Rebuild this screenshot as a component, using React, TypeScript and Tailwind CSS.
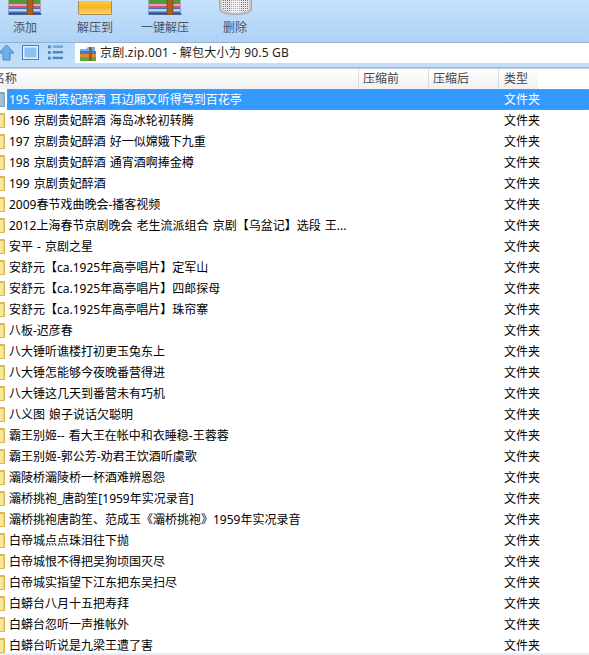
const rows = [
  "195 京剧贵妃醉酒 耳边厢又听得驾到百花亭",
  "196 京剧贵妃醉酒 海岛冰轮初转腾",
  "197 京剧贵妃醉酒 好一似嫦娥下九重",
  "198 京剧贵妃醉酒 通宵酒啊捧金樽",
  "199 京剧贵妃醉酒",
  "2009春节戏曲晚会-播客视频",
  "2012上海春节京剧晚会 老生流派组合 京剧【乌盆记】选段 王...",
  "安平 - 京剧之星",
  "安舒元【ca.1925年高亭唱片】定军山",
  "安舒元【ca.1925年高亭唱片】四郎探母",
  "安舒元【ca.1925年高亭唱片】珠帘寨",
  "八板-迟彦春",
  "八大锤听谯楼打初更玉兔东上",
  "八大锤怎能够今夜晚番营得进",
  "八大锤这几天到番营未有巧机",
  "八义图 娘子说话欠聪明",
  "霸王别姬-- 看大王在帐中和衣睡稳-王蓉蓉",
  "霸王别姬-郭公芳-劝君王饮酒听虞歌",
  "灞陵桥灞陵桥一杯酒难辨恩怨",
  "灞桥挑袍_唐韵笙[1959年实况录音]",
  "灞桥挑袍唐韵笙、范成玉《灞桥挑袍》1959年实况录音",
  "白帝城点点珠泪往下抛",
  "白帝城恨不得把吴狗顷国灭尽",
  "白帝城实指望下江东把东吴扫尽",
  "白蟒台八月十五把寿拜",
  "白蟒台忽听一声推帐外",
  "白蟒台听说是九梁王遭了害",
];

function RarIcon() {
  return (
    <svg viewBox="0 0 34 15" className="h-[15px] w-[34px]">
      <rect x="0.5" y="-4" width="32" height="7" fill="#4f9a3f" />
      <rect x="0.5" y="3" width="32" height="5" fill="#d8506f" />
      <rect x="1" y="4" width="31" height="2" fill="#eb9fb0" />
      <rect x="0.5" y="8" width="32" height="6" fill="#3f6fc0" />
      <rect x="1" y="9" width="31" height="2.5" fill="#bcd3ef" />
      <rect x="0.5" y="13.5" width="33" height="1.2" fill="#26355f" />
      <rect x="19" y="-4" width="6" height="19" fill="#a8621e" stroke="#6e3f10" strokeWidth="0.6" />
    </svg>
  );
}

function TrashIcon() {
  return (
    <svg viewBox="0 0 33 15" className="h-[15px] w-[33px]">
      <defs>
        <pattern id="dots" width="2" height="2" patternUnits="userSpaceOnUse">
          <rect width="2" height="2" fill="#e8e8e8" />
          <rect width="1" height="1" fill="#777" />
        </pattern>
      </defs>
      <path d="M0.5 -2 H32.5 V9 Q32 14.5 16.5 14.5 Q1 14.5 0.5 9 Z" fill="#c9c9c9" stroke="#8a8a8a" strokeWidth="0.6" />
      <path d="M3 -2 H30 V9 Q24 12.5 16.5 12.5 Q9 12.5 3 9 Z" fill="url(#dots)" />
      <rect x="12" y="-2" width="9" height="15" fill="#fff" opacity="0.4" />
    </svg>
  );
}

function ToolButton({ label, children }: { label: string; children: React.ReactNode }) {
  return (
    <div className="flex w-[70px] shrink-0 flex-col items-center">
      <div className="flex h-[15px] items-end">{children}</div>
      <div className="mt-[5px] h-[16px] text-[12px] leading-[16px] text-[#4d545e]">{label}</div>
    </div>
  );
}

function FolderStub({ selected }: { selected?: boolean }) {
  return (
    <svg viewBox="0 0 5 15" className="h-[15px] w-[5px] shrink-0">
      <rect x="-4" y="0" width="9" height="15" rx="1" fill={selected ? "#7fa6bd" : "#dcb64f"} />
      <rect x="0" y="2" width="3.5" height="12" fill={selected ? "#a3c2d6" : "#f9e79a"} />
    </svg>
  );
}

export default function App() {
  return (
    <div
      className="h-[655px] w-[589px] overflow-hidden bg-white text-[12px] text-black"
      style={{ fontFamily: '"Noto Sans", "Noto Sans CJK SC", sans-serif' }}
    >
      <div className="h-[43px] border-b border-[#8fb0d2] bg-gradient-to-b from-[#c6e1fb] to-[#aed2f6]">
        <div className="ml-[-10px] flex">
          <ToolButton label="添加">
            <RarIcon />
          </ToolButton>
          <ToolButton label="解压到">
            <div className="h-[14px] w-[34px] rounded-b-[2px] border border-t-0 border-[#a88c55] bg-gradient-to-b from-[#ffc93a] via-[#fbb425] to-[#fdd76a]" />
          </ToolButton>
          <ToolButton label="一键解压">
            <RarIcon />
          </ToolButton>
          <ToolButton label="删除">
            <TrashIcon />
          </ToolButton>
        </div>
      </div>

      <div className="flex h-[25px] items-start border-b border-[#9fb9d6] bg-gradient-to-b from-[#b9daf9] to-[#c3dffa]">
        <svg viewBox="0 0 14 17" className="mt-[1px] h-[17px] w-[14px] shrink-0">
          <path d="M-1 9 L6.5 1 L14 9 H10 V16 H3 V9 Z" fill="#6fb0e6" stroke="#3f86c8" strokeWidth="1" />
        </svg>
        <svg viewBox="0 0 17 15" className="ml-[8px] mt-[2px] h-[15px] w-[17px] shrink-0">
          <rect x="0.5" y="0.5" width="16" height="14" fill="#e6f1fb" stroke="#3f80c4" />
          <rect x="2.5" y="2.5" width="12" height="10" fill="#8fc0ee" />
        </svg>
        <svg viewBox="0 0 16 15" className="ml-[9px] mt-[2px] h-[15px] w-[15px] shrink-0">
          <g fill="#4c86c2">
            <rect x="0" y="0" width="3" height="3" />
            <rect x="0" y="6" width="3" height="3" />
            <rect x="0" y="12" width="3" height="3" />
            <rect x="5" y="0" width="11" height="2.5" fill="#6ea3d8" />
            <rect x="5" y="6" width="11" height="2.5" />
            <rect x="5" y="12" width="11" height="2.5" />
          </g>
        </svg>
        <div className="ml-[12px] flex h-[20px] flex-1 items-center bg-white pl-[5px] text-[12px] tracking-[0.2px] text-[#222]">
          <svg viewBox="0 0 16 15" className="mr-[4px] h-[15px] w-[16px] shrink-0">
            <path d="M0 3 H6 L8 1 H15 V5 H0 Z" fill="#6fb3e8" />
            <rect x="0" y="5" width="16" height="3" fill="#4f76c0" />
            <rect x="0" y="8" width="16" height="3" fill="#e8853a" />
            <rect x="0" y="11" width="16" height="4" fill="#5aa83f" />
            <rect x="9" y="1" width="3" height="14" fill="#9a5d1e" />
          </svg>
          京剧.zip.001 - 解包大小为 90.5 GB
        </div>
      </div>

      <div className="flex h-[21px] items-center border-t border-[#c4ccd6] bg-gradient-to-b from-white to-[#f0f0f0] text-[#444]">
        <div className="w-[358px] pl-0 leading-[20px]">
          <span className="ml-[-7px] inline-block">名称</span>
        </div>
        <div className="h-full w-[70px] border-l border-[#dcdcdc] pl-[4px] leading-[20px]">压缩前</div>
        <div className="h-full w-[70px] border-l border-[#dcdcdc] pl-[4px] leading-[20px]">压缩后</div>
        <div className="h-full w-[40px] border-l border-[#dcdcdc] pl-[5px] leading-[20px]">类型</div>
        <div className="h-full flex-1 bg-white" />
      </div>

      <div className="h-[564px] overflow-hidden">
        {rows.map((name, i) => (
          <div key={name} className="flex h-[21px] items-center">
            <FolderStub selected={i === 0} />
            <div
              className={`ml-[2px] flex h-full flex-1 items-center ${
                i === 0 ? "border border-r-0 border-dotted border-[#c88a4a] bg-[#3399ff] text-white" : "pl-[1px]"
              }`}
            >
              <div className="w-[496px] shrink-0 overflow-hidden pl-[1px] whitespace-nowrap [word-spacing:1px]">
                {name}
              </div>
              <div>文件夹</div>
            </div>
          </div>
        ))}
      </div>
      <div className="h-[2px] bg-[#e8eef5]" />
    </div>
  );
}
